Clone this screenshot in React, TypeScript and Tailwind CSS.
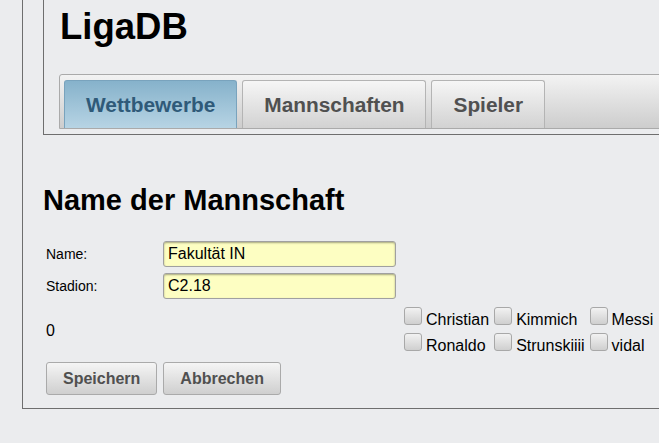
const tabs = ["Wettbewerbe", "Mannschaften", "Spieler"];

const spieler = ["Christian", "Kimmich", "Messi", "Ronaldo", "Strunskiiii", "vidal"];

const App = () => {
  return (
    <div className="w-[659px] h-[443px] overflow-hidden bg-[#ebecee] font-['Liberation_Sans',Arial,sans-serif] text-black">
      <div className="ml-[22px] w-[720px] border-l border-r border-b border-[#6e6e6e] pb-[13px]">
        {/* header box */}
        <div className="ml-[20px] w-[680px] border-l border-r border-b border-[#6e6e6e] pt-[6px] pb-[5px]">
          <h1 className="ml-[16px] text-[36.5px] leading-[41px] font-bold">LigaDB</h1>
          <div className="ml-[15px] mt-[27px] h-[55px] border border-[#aaaaaa] rounded-tl-[3px] bg-gradient-to-b from-[#f3f3f3] to-[#cdcdcd] pl-[4px] pt-[5px] flex gap-[5px]">
            {tabs.map((t, i) => (
              <div
                key={t}
                className={
                  i === 0
                    ? "h-[48px] px-[21px] flex items-center border border-b-0 border-[#79a3bd] rounded-t-[3px] bg-gradient-to-b from-[#86b2cb] to-[#b7d4e4] text-[#2f5a79] text-[20.85px] font-bold"
                    : "h-[48px] px-[21px] flex items-center border border-b-0 border-[#b4b4b4] rounded-t-[3px] bg-gradient-to-b from-[#f6f6f6] to-[#d2d2d2] text-[#505050] text-[20.85px] font-bold"
                }
              >
                {t}
              </div>
            ))}
          </div>
        </div>

        {/* form */}
        <div className="pl-[20px]">
          <h2 className="mt-[49px] text-[29px] leading-[33px] font-bold">Name der Mannschaft</h2>
          <div className="mt-[24px] pl-[3px] grid grid-cols-[109px_233px_auto] gap-x-2 text-[14px]">
            <div className="flex items-center h-[26px]">Name:</div>
            <input
              defaultValue="Fakultät IN"
              className="h-[26px] w-[233px] rounded-[3px] border border-[#a0a0a0] bg-[#fdfec2] px-[4px] text-[16px] shadow-[inset_0_1px_2px_rgba(0,0,0,0.35)] outline-none"
            />
            <div />
            <div className="flex items-center h-[26px] mt-[6px]">Stadion:</div>
            <input
              defaultValue="C2.18"
              className="mt-[6px] h-[26px] w-[233px] rounded-[3px] border border-[#a0a0a0] bg-[#fdfec2] px-[4px] text-[16px] shadow-[inset_0_1px_2px_rgba(0,0,0,0.35)] outline-none"
            />
            <div />
            <div className="mt-[23px] text-[16px] leading-[18px]">0</div>
            <div />
            <div className="mt-[8px] grid grid-cols-[auto_auto_auto] justify-start gap-x-[5px] text-[16px]">
              {spieler.map((s) => (
                <label key={s} className="flex items-baseline gap-[4px] leading-[26px]">
                  <span className="w-[18px] h-[18px] rounded-[3px] border border-[#a8a8a8] bg-gradient-to-b from-[#f2f2f2] to-[#cfcfcf]" />
                  <span>{s}</span>
                </label>
              ))}
            </div>
          </div>
          <div className="mt-[3px] pl-[3px] flex gap-[6px]">
            <button className="h-[33px] px-[16px] rounded-[3px] border border-[#aaaaaa] bg-gradient-to-b from-[#f5f5f5] to-[#cfcfcf] text-[16px] font-bold text-[#505050]">
              Speichern
            </button>
            <button className="h-[33px] px-[16px] rounded-[3px] border border-[#aaaaaa] bg-gradient-to-b from-[#f5f5f5] to-[#cfcfcf] text-[16px] font-bold text-[#505050]">
              Abbrechen
            </button>
          </div>
        </div>
      </div>
    </div>
  );
};

export default App;
